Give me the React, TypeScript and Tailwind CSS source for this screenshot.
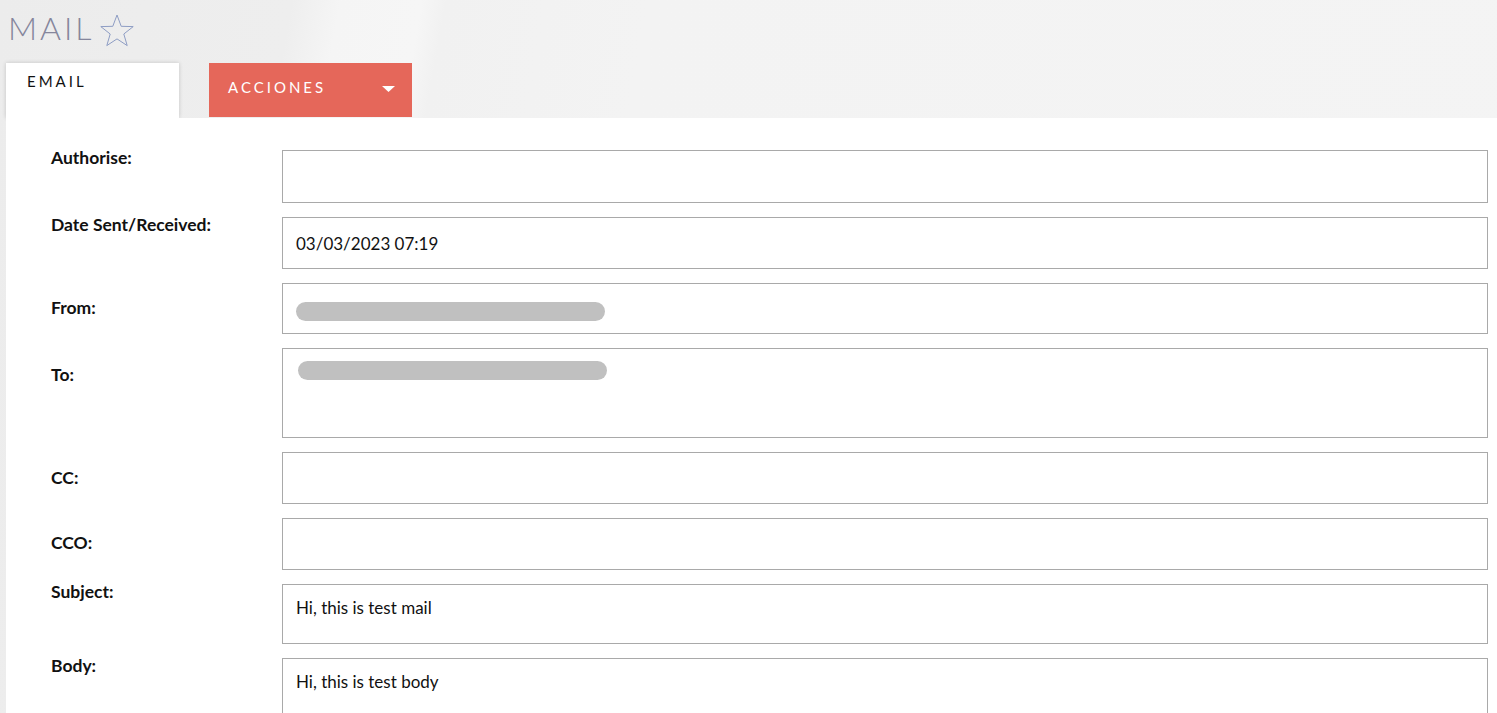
import { ReactNode } from 'react'

type Row = {
  label: string
  labelTop: number
  height: number
  children?: ReactNode
  valueTop?: number
}

function Redacted() {
  return <div className="h-[19px] w-[309px] rounded-full bg-[#c0c0c0]" />
}

export default function App() {
  const rows: Row[] = [
    { label: 'Authorise:', labelTop: -3, height: 53 },
    { label: 'Date Sent/Received:', labelTop: -3, height: 52, valueTop: 15, children: <span>03/03/2023 07:19</span> },
    { label: 'From:', labelTop: 14, height: 51, valueTop: 18, children: <Redacted /> },
    { label: 'To:', labelTop: 16, height: 90, valueTop: 12, children: <div className="ml-[2px]"><Redacted /></div> },
    { label: 'CC:', labelTop: 15, height: 52 },
    { label: 'CCO:', labelTop: 14, height: 52 },
    { label: 'Subject:', labelTop: -3, height: 60, valueTop: 12, children: <span>Hi, this is test mail</span> },
    { label: 'Body:', labelTop: -3, height: 80, valueTop: 12, children: <span>Hi, this is test body</span> },
  ]

  return (
    <div
      className="h-[713px] w-full overflow-hidden bg-[#f3f3f3] bg-[linear-gradient(100deg,#ececec_0%,#eeeeee_18%,#f5f5f5_21%,#f6f6f6_26%,#f1f1f1_27.5%,#f3f3f3_40%,#f4f4f4_100%)]"
      style={{ fontFamily: 'Lato, "Open Sans", sans-serif' }}
    >
      {/* header */}
      <div className="flex h-[63px] items-start pl-[8px] pt-[8px]">
        <h1 className="text-[32px] font-light leading-[40px] tracking-[3px] text-[#85869c]">MAIL</h1>
        <svg width="38" height="36" viewBox="0 0 38 36" className="ml-[3px] mt-[5px]">
          <path
            d="M19 2 L23.2 13.3 L35.2 13.6 L25.8 21 L29.2 32.6 L19 25.9 L8.8 32.6 L12.2 21 L2.8 13.6 L14.8 13.3 Z"
            fill="none"
            stroke="#8e9dc4"
            strokeWidth="1"
            strokeLinejoin="round"
          />
        </svg>
      </div>

      {/* tabs */}
      <div className="flex h-[55px] items-start pl-[6px]">
        <div className="relative z-10 h-[55px] w-[173px] bg-white pl-[21px] pt-[6px] shadow-[0_0_4px_rgba(0,0,0,0.18)]">
          <span className="text-[15px] tracking-[3px] text-[#111]">EMAIL</span>
        </div>
        <button className="ml-[30px] flex h-[54px] w-[203px] items-center justify-between bg-[#e5675a] pb-[6px] pl-[19px] pr-[17px] text-white">
          <span className="text-[15px] tracking-[3px]">ACCIONES</span>
          <svg width="13" height="6" viewBox="0 0 13 6" className="mt-[4px]">
            <path d="M0 0 H13 L6.5 6 Z" fill="white" />
          </svg>
        </button>
      </div>

      {/* form */}
      <div className="relative z-20 ml-[6px] bg-white pb-[20px] pl-[45px] pr-[9px] pt-[32px]">
        <div className="flex flex-col gap-[14px]">
          {rows.map(r => (
            <div key={r.label} className="flex items-start">
              <div
                className="w-[231px] shrink-0 text-[17.5px] font-bold leading-[22px] text-[#111]"
                style={{ marginTop: r.labelTop }}
              >
                {r.label}
              </div>
              <div
                className="flex-1 border border-[#a9a9a9] pl-[13px] text-[17px] leading-[22px] text-[#111]"
                style={{ height: r.height, paddingTop: r.valueTop ?? 0 }}
              >
                {r.children}
              </div>
            </div>
          ))}
        </div>
      </div>
    </div>
  )
}
